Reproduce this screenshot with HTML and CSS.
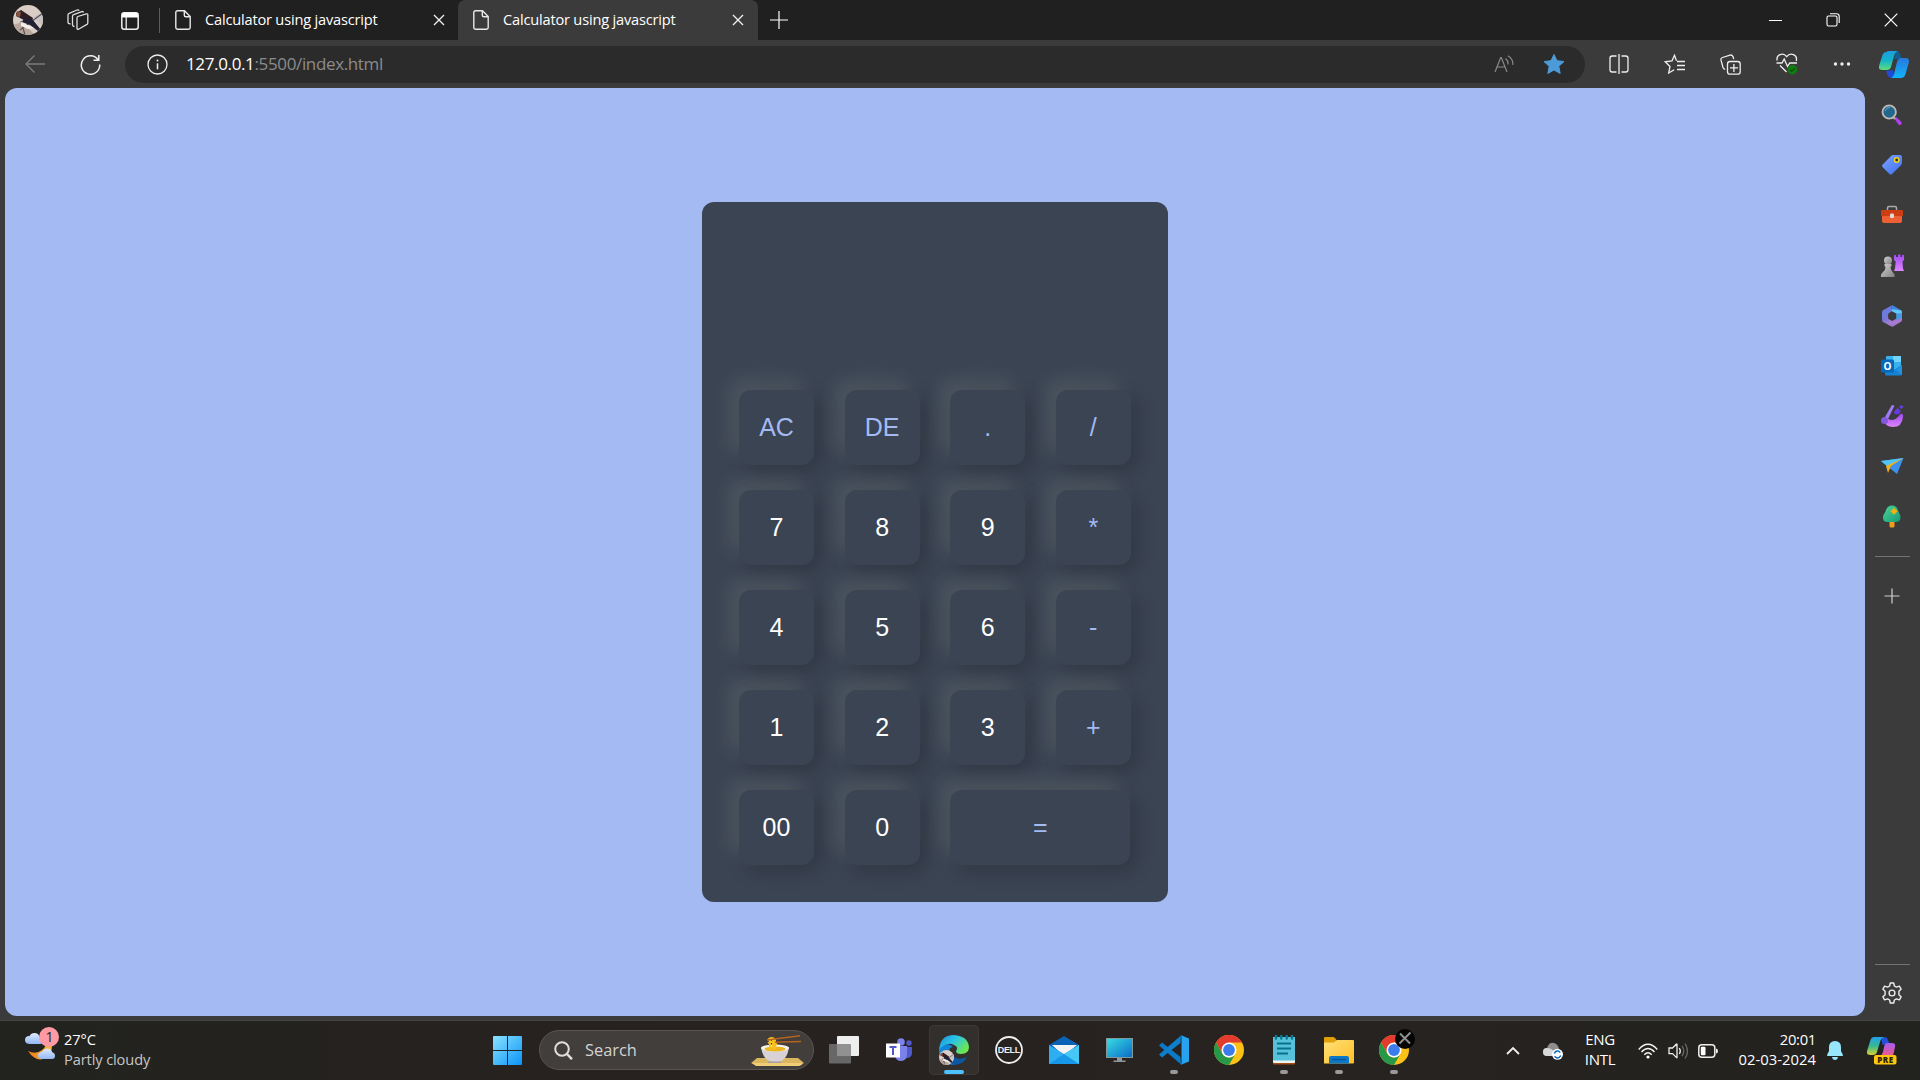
FILE: index.html
```html
<!DOCTYPE html>
<html lang="en">
<head>
<meta charset="utf-8">
<title>Calculator using javascript</title>
<link rel="stylesheet" href="styles.css">
</head>
<body>
<svg class="defs" aria-hidden="true">
  <defs>
    <linearGradient id="g-win" x1="0" y1="0" x2="1" y2="1"><stop offset="0" stop-color="#8be3ff"/><stop offset="1" stop-color="#0a93f8"/></linearGradient>
    <linearGradient id="g-cop1" x1="0" y1="0" x2="0" y2="1"><stop offset="0" stop-color="#1b9de2"/><stop offset=".5" stop-color="#14b4c8"/><stop offset="1" stop-color="#5fdc7c"/></linearGradient>
    <linearGradient id="g-cop2" x1="0" y1="0" x2="0" y2="1"><stop offset="0" stop-color="#2878dc"/><stop offset="1" stop-color="#10b4fa"/></linearGradient>
    <linearGradient id="g-pre1" x1="0" y1="0" x2="0" y2="1"><stop offset="0" stop-color="#22a0f0"/><stop offset=".5" stop-color="#38b890"/><stop offset="1" stop-color="#d8d030"/></linearGradient>
    <linearGradient id="g-pre2" x1="0" y1="0" x2="0" y2="1"><stop offset="0" stop-color="#a45cf0"/><stop offset="1" stop-color="#f05a8c"/></linearGradient>
    <linearGradient id="g-tag" x1="0" y1="0" x2="1" y2="1"><stop offset="0" stop-color="#7ba6ff"/><stop offset="1" stop-color="#3f6cf0"/></linearGradient>
    <linearGradient id="g-grey" x1="0" y1="0" x2="1" y2="1"><stop offset="0" stop-color="#d0d0d0"/><stop offset="1" stop-color="#828282"/></linearGradient>
    <linearGradient id="g-purple" x1="0" y1="0" x2="0" y2="1"><stop offset="0" stop-color="#a04af0"/><stop offset="1" stop-color="#dd86ff"/></linearGradient>
    <linearGradient id="g-tree" x1="0" y1="0" x2="1" y2="1"><stop offset="0" stop-color="#4fd697"/><stop offset="1" stop-color="#149a76"/></linearGradient>
    <linearGradient id="g-screen" x1="0" y1="0" x2="1" y2="1"><stop offset="0" stop-color="#36dbe2"/><stop offset="1" stop-color="#0c6cc8"/></linearGradient>
    <linearGradient id="g-edge" x1="0" y1="0" x2="1" y2=".6"><stop offset="0" stop-color="#1b8ee0"/><stop offset=".5" stop-color="#2bc4e4"/><stop offset="1" stop-color="#6ee84c"/></linearGradient>
    <linearGradient id="g-folder" x1="0" y1="0" x2="1" y2="1"><stop offset="0" stop-color="#ffe07a"/><stop offset="1" stop-color="#ffbe24"/></linearGradient>
    <linearGradient id="g-moon" x1="0" y1="0" x2="1" y2="0"><stop offset="0" stop-color="#f07a1c"/><stop offset="1" stop-color="#f6bd33"/></linearGradient>
    <linearGradient id="g-cloud" x1="0" y1="0" x2="0" y2="1"><stop offset="0" stop-color="#dfeaff"/><stop offset="1" stop-color="#92b8f4"/></linearGradient>
    <linearGradient id="g-365" x1="0" y1="0" x2="1" y2="1"><stop offset="0" stop-color="#6b6fd6"/><stop offset="1" stop-color="#b887cf"/></linearGradient>
    <clipPath id="c-avatar"><circle cx="15" cy="15" r="15"/></clipPath>
    <symbol id="avatar" viewBox="0 0 30 30"><g clip-path="url(#c-avatar)"><rect width="30" height="30" fill="#d9cdc6"/><path d="M0 20l9-3 13 13H0z" fill="#b9a79b"/><path d="M20 12l10-5v14z" fill="#c9c2c2"/><path d="M30 8L7 25M8 16l4 14" stroke="#55505c" stroke-width="1.2"/><path d="M3 8l5-3 6 4 6 4-1 4-8-2-8-4z" fill="#2e1e24"/><path d="M4 6l4 1-1 5-4-1z" fill="#8a533f"/><path d="M11 13l9 2 8 10-3 1-8-6-8-3z" fill="#212035"/><path d="M8 17l13 6-6 1-7-3z" fill="#f4eeea"/></g></symbol>
    <symbol id="file" viewBox="0 0 16 20"><path d="M2.5.8h7L15.2 6.500v11a1.700 1.700 0 0 1-1.700 1.700h-11A1.700 1.700 0 0 1 .8 17.500v-15A1.700 1.700 0 0 1 2.500.8zM9.300 1v4.200a1.500 1.500 0 0 0 1.500 1.500H15" fill="none" stroke="#e8e8e8" stroke-width="1.400"/></symbol>
    <symbol id="x" viewBox="0 0 12 12"><path d="M1 1l10 10M11 1L1 11" stroke="#f2f2f2" stroke-width="1.300" fill="none"/></symbol>
    <symbol id="chrome" viewBox="0 0 30 30"><circle cx="15" cy="15" r="15" fill="#fbc116"/><path d="M2 7.500A15 15 0 0 1 28 7.500H15l-6.500 11z" fill="#e33b2e"/><path d="M2 7.500a15 15 0 0 0 13 22.500l6.500-11.200A7.500 7.500 0 0 1 8.500 18.800z" fill="#279847"/><circle cx="15" cy="15" r="7.500" fill="#fff"/><circle cx="15" cy="15" r="5.900" fill="#3b7ded"/></symbol>
  </defs>
</svg>

<div class="screen">
  <header class="tabstrip">
    <div class="slot avatar-slot"><svg width="30" height="30"><use href="#avatar"/></svg></div>
    <div class="slot workspaces"><svg width="22" height="22" viewBox="0 0 22 22" fill="none" stroke="#dedede" stroke-width="1.300"><path d="M10.800 7.500l8.500-2.600q1.500-.4 1.500 1.100v8q0 1.300-1.300 1.700l-8 4.500q-1.500.7-1.500-1V9q0-1.200 .8-1.500z"/><path d="M7.500 17.500q-2-.2-2-1.700V7.200q0-1.200 1.200-1.600l8-3q1.500-.4 1.800 .9M3.500 15Q1 14.800 1 13.300V6q0-1.200 1.200-1.600L10 1q1.600-.5 2 .8"/></svg></div>
    <div class="slot tabmenu"><svg width="18" height="18" viewBox="0 0 18 18"><rect x=".8" y=".8" width="16.400" height="16.400" rx="2.500" fill="none" stroke="#eee" stroke-width="1.500"/><path d="M1 2.500Q1 .8 2.700.8h12.600Q17 .8 17 2.500v3H1z" fill="#fff"/><path d="M5.200 5v12" stroke="#eee" stroke-width="1.300"/></svg></div>
    <i class="divider"></i>
    <div class="tab"><svg width="16" height="20"><use href="#file"/></svg><span class="tab-title">Calculator using javascript</span><svg width="12" height="12"><use href="#x"/></svg></div>
    <div class="tab active"><svg width="16" height="20"><use href="#file"/></svg><span class="tab-title">Calculator using javascript</span><svg width="12" height="12"><use href="#x"/></svg></div>
    <div class="slot newtab"><svg width="18" height="18" viewBox="0 0 18 18"><path d="M9 0v18M0 9h18" stroke="#fff" stroke-width="1.200"/></svg></div>
    <div class="window-controls">
      <svg width="13" height="13" viewBox="0 0 13 13"><path d="M0 6.500h13" stroke="#fff"/></svg>
      <svg width="14" height="14" viewBox="0 0 14 14" fill="none" stroke="#fff" stroke-width="1.100"><rect x="1" y="3" width="10" height="10" rx="1.500"/><path d="M4 .8h6.500Q13.200.8 13.200 3.500V10"/></svg>
      <svg width="14" height="14" viewBox="0 0 14 14"><path d="M.7.7l12.600 12.600M13.300.7L.7 13.300" stroke="#fff" stroke-width="1.200"/></svg>
    </div>
  </header>

  <nav class="toolbar">
    <div class="slot back"><svg width="20" height="18" viewBox="0 0 20 18" fill="none" stroke="#7c7c7c" stroke-width="1.300"><path d="M20 9H1M9.500.5L1 9l8.500 8.500"/></svg></div>
    <div class="slot reload"><svg width="21" height="21" viewBox="0 0 21 21" fill="none" stroke="#f0f0f0" stroke-width="1.500"><path d="M18.200 6A9.200 9.200 0 1 0 19.700 10.500M18.800 1v5.300h-5.300"/></svg></div>
    <div class="address">
      <svg width="21" height="21" viewBox="0 0 21 21"><circle cx="10.500" cy="10.500" r="9.500" fill="none" stroke="#eee" stroke-width="1.300"/><path d="M10.500 9.300v6" stroke="#eee" stroke-width="1.500"/><circle cx="10.500" cy="6.500" r="1" fill="#eee"/></svg>
      <span class="url"><b>127.0.0.1</b>:5500/index.html</span>
      <svg width="20" height="18" viewBox="0 0 20 18" fill="none" stroke="#8a8a8a" stroke-width="1.200"><path d="M1 17L6.700 2.500h.6L13 17M3 12h8M11.500 3.500q3 2.500 2.500 6M14 .8q5.500 3.500 4.700 9"/></svg>
      <svg class="star" width="22" height="20" viewBox="0 0 22 20"><path d="M11 .5l3 6.200 7 .9-5.200 4.700 1.400 7.200L11 16l-6.200 3.500 1.400-7.200L1 7.600l7-.9z" fill="#4c9bd8" stroke="#4c9bd8" stroke-linejoin="round"/></svg>
    </div>
    <div class="tools">
      <svg width="20" height="20" viewBox="0 0 20 20" fill="none" stroke="#eee" stroke-width="1.300"><path d="M7.500 2H3.200Q1 2 1 4.200v11.600Q1 18 3.200 18h4.300M12.500 2h4.300Q19 2 19 4.200v11.600q0 2.200-2.200 2.200h-4.300M10 0v20"/></svg>
      <svg width="21" height="20" viewBox="0 0 21 20" fill="none" stroke="#eee" stroke-width="1.300"><path d="M12.500 6.800L10.500 1.300 8 6.800l-6.800 1L6 12.500 4.700 19l5.500-3.300M13 7.500h8M13 11.500h8M13 15.500h8"/></svg>
      <svg width="21" height="21" viewBox="0 0 21 21" fill="none" stroke="#eee" stroke-width="1.300"><rect x="7.500" y="7.500" width="12.700" height="12.700" rx="2.500"/><path d="M13.900 10v8M10 13.900h8M5.200 15.300Q3.500 15 3 13.500L1 6.200Q.5 4.200 2.500 3.500L10 1.100q2-.5 3 1.500l.7 2.500"/></svg>
      <svg width="22" height="22" viewBox="0 0 22 22" fill="none" stroke="#eee" stroke-width="1.300"><path d="M1.200 7.500C-.2 2 7-1.500 10.700 3.700 14.500-1.500 22 2 20.200 8M.5 10H6l2.200-4 3.300 7.500 2.300-3.500H21M4 12.500l6.500 6.500"/><circle cx="16.300" cy="16.700" r="4.800" fill="#107c10" stroke="none"/><path d="M14 16.700l1.700 1.700 3-3" stroke="#0b4f0c"/></svg>
      <svg width="18" height="4" viewBox="0 0 18 4" fill="#eee"><circle cx="2.500" cy="2" r="1.700"/><circle cx="9" cy="2" r="1.700"/><circle cx="15.500" cy="2" r="1.700"/></svg>
    </div>
    <div class="slot copilot"><svg width="30" height="27" viewBox="0 0 30 27"><path d="M17 0q3 0 4 3l1.500 4.500L15 8z" fill="#0f5f90"/><path d="M7.500 1Q8.200 0 10 0h9q-3 1-4 5l-3 11q-1 3-4 3H3q-4 0-3-4L3.500 4Q4.500 1 7.500 1z" fill="url(#g-cop1)"/><path d="M7 20l7-1 1 8h-1.500Q9 27 8 23z" fill="#224ad8"/><path d="M22 7h5q3.500 0 3 4l-3.500 12q-1 4-5 4H12q2-1 3-4l3-12q1-4 4-4z" fill="url(#g-cop2)"/></svg></div>
  </nav>

  <div class="browser-body">
    <main class="page">
      <div class="calculator">
        <div class="display"></div>
        <div class="keys">
          <button class="op">AC</button><button class="op">DE</button><button class="op">.</button><button class="op">/</button>
          <button>7</button><button>8</button><button>9</button><button class="op">*</button>
          <button>4</button><button>5</button><button>6</button><button class="op">-</button>
          <button>1</button><button>2</button><button>3</button><button class="op">+</button>
          <button>00</button><button>0</button><button class="op equal">=</button>
        </div>
      </div>
    </main>
    <aside class="sidebar">
      <div class="app"><svg width="22" height="22" viewBox="0 0 22 22"><path d="M13 14l2-1 5.500 5q.8 1.500-.5 2.500t-2.500 0z" fill="#b43df5"/><path d="M12 13l2 2" stroke="#aaa" stroke-width="2"/><circle cx="8.200" cy="8" r="6.700" fill="#23688c" stroke="#bdbab5" stroke-width="1.800"/><path d="M4 7q1.500-4 5-3.500" stroke="#5aa4c4" fill="none"/></svg></div>
      <div class="app"><svg width="22" height="22" viewBox="0 0 22 22"><path d="M12 1h7q2 0 2 2v6q0 1.200-1 2.200L11 20q-1.200 1.200-2.500 0l-7-7q-1-1.200 0-2.300L10 2q.9-1 2-1z" fill="url(#g-tag)"/><circle cx="15.700" cy="6" r="2.200" fill="#253050" stroke="#f5d313" stroke-width="1.500"/></svg></div>
      <div class="app"><svg width="24" height="20" viewBox="0 0 24 20"><path d="M7.500 6V3Q7.500 1.500 9 1.500h6q1.500 0 1.500 1.500v3" fill="none" stroke="#aaa" stroke-width="1.500"/><path d="M2 9h20v7q0 2-2 2H4q-2 0-2-2z" fill="#ed6034"/><rect x="1" y="5" width="22" height="6" rx="1" fill="#cf3e12"/><rect x="10" y="8.500" width="4" height="4.500" rx="1.300" fill="#ddd"/></svg></div>
      <div class="app"><svg width="24" height="24" viewBox="0 0 24 24"><path d="M14 1h2v2h2V.5h2.500V3h1.500V1h2v5l-1.500 1.500.5 7 1 2.500H14l1-2.500.7-7L14 6z" fill="url(#g-purple)"/><circle cx="8" cy="6.500" r="4" fill="url(#g-grey)"/><path d="M4.500 10h7v2l-1 1q.5 4 2.500 5.500l1.500 2V23H1v-2.500L3 18q2.500-1.500 2.500-5l-1-1z" fill="url(#g-grey)"/></svg></div>
      <div class="app"><svg width="22" height="22" viewBox="0 0 22 22"><path d="M10.500.5L2 5.300Q1 5.900 1 7v8.500l6.500-3V8.800l3-1.800z" fill="#6f7bdc"/><path d="M10.500.5q.8-.4 1.500 0l8 4.800q1 .6 1 1.700v4.500L10.500 6z" fill="#3f86e4"/><path d="M10.500 6L21 11.500V7l-1-1.700-9.500-1z" fill="#62c8f4"/><path d="M1 15.500l6.500-3.700L11.500 15l-1 6.500L2 17Q1 16.500 1 15.500z" fill="url(#g-365)"/><path d="M21 8v7q0 1.200-1 1.800l-8 4.700q-.8.400-1.500 0V15l4.500-2.500V9z" fill="#a779d0"/><path d="M15 9l6-1v5l-6 2z" fill="#449de4"/><path d="M10.500 6.500l4.700 2.500v4.800l-4 2.200-4-2.300V9z" fill="#3b3b3b"/></svg></div>
      <div class="app"><svg width="22" height="22" viewBox="0 0 22 22"><rect x="5" y="1" width="15" height="15" rx="1" fill="#38b1ed"/><path d="M12 1h7q1 0 1 1v5h-8z" fill="#72d4fa"/><path d="M4 12l9 3 8-5v9q0 1.500-1.500 1.500h-14Q4 20.500 4 19z" fill="#1782d3"/><path d="M15 15l6-5v10z" fill="#1f94e1"/><rect x="0" y="4.500" width="13" height="13" rx="1.200" fill="#0568bb"/><text x="6.500" y="14.700" class="outlook-o">O</text></svg></div>
      <div class="app"><svg width="23" height="24" viewBox="0 0 23 24"><path d="M2 15q2 8 10 8 9 0 10-10 .3-4-2.500-3-3 4-5 5-4 2-7 0z" fill="url(#g-purple)"/><path d="M10.500 1.500q2-1.500 2.800.6L7 15q-2 1-3.500-1z" fill="#9f7cf5"/><circle cx="3.500" cy="16.500" r="3.500" fill="#8358dc"/><path d="M13 7.500l3.500-3.500L20 7l-2.500 3.500-4-.5z" fill="#693ae0"/><path d="M19.500 1l3 1.500-2 2.500-2-1.500z" fill="#6b3ede"/></svg></div>
      <div class="app"><svg width="23" height="18" viewBox="0 0 23 18"><path d="M0 4l22.500-3L16 17l-5-4z" fill="#3d91ed"/><path d="M0 4l22.500-3L7 10z" fill="#50c5f4"/><path d="M5 9l17.500-8L10 9l-3 7z" fill="#efb118"/></svg></div>
      <div class="app"><svg width="20" height="23" viewBox="0 0 20 23"><path d="M7.500 14h5v7q0 1.500-1.500 1.500H9Q7.500 22.500 7.500 21z" fill="#f09a1e"/><path d="M10 .5q5 0 6 5 2.500 4.500 2.500 7 0 4.500-5 4.500h-8Q1 17 1 12.500q0-2.500 2.500-6Q5 .5 10 .5z" fill="url(#g-tree)"/><circle cx="12" cy="6.300" r="2.500" fill="#f6ae13"/><path d="M12 3v6.600M8.700 6.300h6.600" stroke="#f6ae13" stroke-width="1.600"/></svg></div>
      <hr>
      <svg class="add" width="16" height="16" viewBox="0 0 16 16"><path d="M8 .5v15M.5 8h15" stroke="#d0d0d0" stroke-width="1.200"/></svg>
      <hr class="bottom">
      <svg class="gear" width="22" height="22" viewBox="0 0 22 22" fill="none" stroke="#eee" stroke-width="1.400"><path d="M9.300 1h3.400l.7 3 2 1.100 3-.9 1.700 3-2.200 2.100v3.400l2.200 2.100-1.700 3-3-.9-2 1.100-.7 3H9.300l-.7-3-2-1.100-3 .9-1.700-3 2.200-2.100V9.300L1.900 7.200l1.700-3 3 .9 2-1.100z" stroke-linejoin="round"/><circle cx="11" cy="11" r="2.900"/></svg>
    </aside>
  </div>

  <footer class="taskbar">
    <div class="weather">
      <svg width="36" height="36" viewBox="0 0 36 36"><path d="M3 25q8 4 14-1 5-4 4-9h5q3 12-5 17Q11 37 3 25z" fill="url(#g-moon)"/><path d="M5 18q-5 0-5-4t4.500-4Q6 7 9.500 7q4 0 5 4 3.500 1 3.500 4t-3 3z" fill="url(#g-cloud)"/><path d="M17 33q-4 0-4-3.500t4-3.500q1.500-3.500 5-3.500 4 0 5.200 3.700Q30 27 30 30t-3 3z" fill="url(#g-cloud)"/><circle cx="24" cy="11" r="10" fill="#ff99a4"/><text x="24.500" y="16" class="badge-number">1</text></svg>
      <div class="weather-text"><span>27°C</span><span class="dim">Partly cloudy</span></div>
    </div>
    <div class="start"><svg width="29" height="29" viewBox="0 0 29 29"><path d="M1 0h13v14H0V1q0-1 1-1zM15 0h13q1 0 1 1v13H15zM0 15h14v14H1q-1 0-1-1zM15 15h14v13q0 1-1 1H15z" fill="url(#g-win)"/></svg></div>
    <div class="search">
      <svg width="19" height="19" viewBox="0 0 19 19" fill="none" stroke="#dedede" stroke-width="2"><circle cx="8" cy="8" r="6.800"/><path d="M13 13l5 5.200" stroke-width="2.500"/></svg>
      <span>Search</span>
      <svg class="noodles" width="54" height="31" viewBox="0 0 54 31"><path d="M7 23h41l6 5-4 2.500H6L1 28z" fill="#dab65e"/><path d="M2 28h50v1.500l-3 1.500H6z" fill="#f0cc76"/><path d="M24 27q-11 0-13-15h28q-2 15-13 15z" fill="#d8d2d6"/><ellipse cx="25" cy="13" rx="14" ry="3.500" fill="#f5f2ee"/><path d="M18 26.500h13v1.500H18z" fill="#a89cab"/><ellipse cx="25" cy="14" rx="10.500" ry="2.500" fill="#ecb51b"/><path d="M18 5q4-4 7 0v9M20 4v11M23 4v10M18 8q5-3 9 2" fill="none" stroke="#f6c020" stroke-width="2"/><path d="M17 5L50 .8M25 7.300l26-.8" stroke="#b4641e" stroke-width="1.600"/></svg>
    </div>
    <div class="apps">
      <div class="task"><svg width="30" height="28" viewBox="0 0 30 28"><rect x="8" y="0" width="22" height="20" rx="1" fill="#eee"/><rect x="0" y="8" width="22" height="19.500" rx="1" fill="#797979" fill-opacity=".8"/></svg></div>
      <div class="task"><svg width="27" height="24" viewBox="0 0 27 24"><circle cx="15" cy="4" r="3.800" fill="#7b83eb"/><circle cx="23" cy="5" r="2.700" fill="#5059c9"/><path d="M17 9h9v6q0 4-4 5h-5z" fill="#5059c9"/><path d="M9 8h12v8q0 7-6 7-5 0-6-5z" fill="#7b83eb"/><rect x="0" y="5.500" width="14" height="14" fill="#fff"/><path d="M3.500 9h7M7 9v8" stroke="#5059c9" stroke-width="2"/></svg></div>
      <div class="task current"><svg width="30" height="30" viewBox="0 0 30 30"><path d="M28 22Q24 30 15 30 2 29 0 17 0 7 12 10q-3 6 2 11t14 1z" fill="#0d56a2"/><path d="M0 15q0 13 14 15-6-5-5-12 1-6 5-6-6-6-14 3z" fill="#1385d7"/><path d="M0 15Q1 0 15 0q14 1 15 12 0 7-8 7-5 0-5-3 3-4-2-6Q8 6 0 15z" fill="url(#g-edge)"/><svg x="0" y="15" width="15" height="15"><use href="#avatar"/></svg></svg></div>
      <div class="task"><svg width="28" height="28" viewBox="0 0 28 28"><circle cx="14" cy="14" r="13" fill="none" stroke="#eee" stroke-width="1.800"/><text x="13.800" y="17.400" class="dell">DELL</text></svg></div>
      <div class="task"><svg width="30" height="28" viewBox="0 0 30 28"><path d="M0 9L15 0l15 9v9H0z" fill="#0a61b5"/><path d="M3 9h25L15 20z" fill="#f3f3f3"/><path d="M0 9l15 9 15-9v19H0z" fill="#2eadf0"/><path d="M0 28L30 9v19z" fill="#46c8f6"/><path d="M15 18l15 10H0z" fill="#1697e8"/></svg></div>
      <div class="task"><svg width="27" height="25" viewBox="0 0 27 25"><rect width="27" height="20" fill="#82999b"/><rect x="1" y="1" width="25" height="18" fill="url(#g-screen)"/><path d="M11 20h5v2.500h3.500v1.500h-12v-1.500H11z" fill="#91969a"/></svg></div>
      <div class="task open"><svg width="30" height="30" viewBox="0 0 30 30"><path d="M21.500 22L3 7.500 0 10.500l22 19z" fill="#0b79c5"/><path d="M21.500 8L3 22.500 0 19.500 22 .5z" fill="#0d7fcb"/><path d="M21.500 0L30 3.500v23L21.500 30q1-.5 1-2V2q0-1.500-1-2z" fill="#27a2ef"/></svg></div>
      <div class="task"><svg width="30" height="30"><use href="#chrome"/></svg></div>
      <div class="task open"><svg width="22" height="30" viewBox="0 0 22 30"><rect y="5" width="22" height="24.500" rx="1" fill="#aa4d13"/><rect y="2" width="22" height="26" rx="1" fill="#eaf4f5"/><rect y="2" width="22" height="23.500" rx="1" fill="#56c2da"/><path d="M4 8.500h14M4 13.500h14M4 18.500h11" stroke="#09718b" stroke-width="1.800"/><path d="M3 .5v3M8.300.5v3M13.700.5v3M19 .5v3" stroke="#087b93" stroke-width="2.400" stroke-linecap="round"/></svg></div>
      <div class="task open"><svg width="30" height="27" viewBox="0 0 30 27"><path d="M1 0h8q2 0 4 4h16v8H0V1q0-1 1-1z" fill="#dfa00a"/><path d="M0 5.500h10l3-2.500h16q1 0 1 1v21.500q0 1-1 1H0z" fill="url(#g-folder)"/><path d="M5 26.500V21q0-2 2-2h16q2 0 2 2v5.500z" fill="#0d78c8"/><path d="M8 22.500h14" stroke="#07569c" stroke-width="1.500"/></svg></div>
      <div class="task open"><svg width="30" height="30"><use href="#chrome"/></svg><svg class="overlay" width="20" height="20" viewBox="0 0 20 20"><circle cx="10" cy="10" r="10" fill="#050505"/><path d="M5 4.500l10 10M15.500 3.500L4.500 14.500" stroke="#8e8e8e" stroke-width="2"/></svg></div>
    </div>
    <div class="tray">
      <svg class="chevron" width="14" height="9" viewBox="0 0 14 9"><path d="M1 8l6-6 6 6" fill="none" stroke="#eee" stroke-width="1.900"/></svg>
      <svg class="cloud" width="20" height="18" viewBox="0 0 20 18"><path d="M4 14q-4 0-4-4t4-4q2-6 7-5 4 1 5 6l1 4-5 3z" fill="#8e8e8e"/><path d="M4 14q-4 0-4-4t4-4q4 0 8 4v4z" fill="#d8d8d8"/><circle cx="14.500" cy="12.300" r="5.500" fill="#fff"/><path d="M11.300 11.500q1-3 4-2.500l2 1.500M17.800 13.500q-1.500 3-4.300 2.300l-2-1.500" fill="none" stroke="#0a6ac0" stroke-width="1.500"/></svg>
      <div class="lang"><span>ENG</span><span>INTL</span></div>
      <svg class="wifi" width="20" height="16" viewBox="0 0 20 16" fill="none" stroke="#f4f4f4" stroke-width="1.400"><path d="M.7 6.500q9.300-10.500 18.600 0M3.500 9q6.500-7 13 0M6.300 11.700q3.700-4 7.400 0"/><circle cx="10" cy="14" r="1.600" fill="#fff" stroke="none"/></svg>
      <svg class="sound" width="20" height="18" viewBox="0 0 20 18" fill="none" stroke="#eee" stroke-width="1.300"><path d="M1 6h3.500l4-4q.5-.4.5.4v12.800q0 .8-.5.4l-4-4H1z"/><path d="M11.300 6q2 3 0 6"/><path d="M14 3.800q3.500 5.200 0 10.400M17 1.500q5 7.500 0 15" stroke="#666"/></svg>
      <svg class="battery" width="20" height="14" viewBox="0 0 20 14"><rect x=".8" y=".8" width="16" height="12.400" rx="3" fill="none" stroke="#eee" stroke-width="1.500"/><rect x="2.800" y="2.800" width="4.700" height="8.400" rx="1" fill="#fff"/><path d="M18 4.500q2 0 2 2.500t-2 2.500z" fill="#eee"/></svg>
      <div class="clock"><span class="time">20:01</span><span>02-03-2024</span></div>
      <svg class="bell" width="16" height="19" viewBox="0 0 16 19"><path d="M8 0q6 .3 6 6v4l2 4q.3 1-1 1H1q-1.300 0-1-1l2-4V6q0-5.700 6-6zM5 16h6q-.5 3-3 3t-3-3z" fill="#97e6fb"/></svg>
      <svg class="pre" width="30" height="29" viewBox="0 0 30 29"><path d="M14 1h3q3 0 4 3l1.500 4-7 1z" fill="#254fd4"/><path d="M7 1h10q-3 1-4 5L10 16q-1 3-4 3H3q-4 0-3-4L3.500 4Q4.500 1 7 1z" fill="url(#g-pre1)"/><path d="M20 7h5q4 0 3 4l-2 9H13q2-1 3-4l1-5q1-4 3-4z" fill="url(#g-pre2)"/><rect x="7" y="19" width="22.500" height="9.500" rx="2" fill="#ffc60e"/><text x="18.500" y="26.700" class="pre-text">PRE</text></svg>
    </div>
  </footer>
</div>
</body>
</html>
```
FILE: styles.css
```css
* { box-sizing: border-box; }
body { margin: 0; background: #3b3b3b; font-family: "Open Sans", "Noto Sans", sans-serif; color: #fff; overflow: hidden; }
.defs { position: absolute; width: 0; height: 0; }
svg { display: block; flex: none; }
.screen { width: 1920px; height: 1080px; display: grid; grid-template-rows: 40px 48px 932px 60px; }
.slot { display: flex; align-items: center; justify-content: center; flex: none; }

/* tab strip */
.tabstrip { display: flex; background: #202020; align-items: stretch; }
.avatar-slot { width: 56px; }
.workspaces { width: 43px; }
.tabmenu { width: 60px; padding: 1px 0 0 2px; }
.divider { width: 1px; height: 25px; margin-top: 8px; background: #5c5c5c; }
.tab { display: flex; align-items: center; width: 298px; padding: 0 13px 0 15px; }
.tab.active { width: 300px; padding: 0 14px 0 15px; background: #3b3b3b; border-radius: 7px 7px 0 0; }
.tab-title { flex: 1; margin-left: 14px; padding-bottom: 3px; font-size: 14.6px; letter-spacing: -.19px; white-space: nowrap; }
.newtab { width: 42px; }
.window-controls { display: flex; align-items: center; gap: 44px; margin-left: auto; padding-right: 22px; }

/* toolbar */
.toolbar { display: flex; align-items: center; background: #3b3b3b; }
.back { width: 70px; }
.reload { width: 40px; }
.address { display: flex; align-items: center; width: 1460px; height: 37px; margin-left: 15px; padding: 0 20px 0 22px; border-radius: 19px; background: #2b2b2b; }
.url { flex: 1; margin-left: 18px; padding-bottom: 2px; font-size: 17px; color: #8b8b8b; letter-spacing: -.36px; }
.url b { font-weight: 400; color: #fff; }
.star { margin-left: 29px; }
.tools { display: flex; flex: 1; align-items: center; justify-content: space-between; padding: 0 13px 0 24px; }
.copilot { width: 56px; padding-left: 4px; }

/* browser content */
.browser-body { display: flex; background: #3b3b3b; }
.page { display: flex; align-items: center; justify-content: center; width: 1860px; height: 928px; margin-left: 5px; border-radius: 12px; background: #a3baf2; }
.calculator { width: 466px; height: 700px; padding: 37px; border-radius: 12px; background: #3b4453; }
.display { height: 151px; }
.keys { display: grid; grid-template-columns: repeat(4, 75px); gap: 25px 30.600px; }
.keys button { height: 75px; padding: 0; border: 0; border-radius: 12px; background: #3b4453; color: #fff; font: 25px "Liberation Sans", Arial, sans-serif; box-shadow: -10px -10px 19px rgba(240,255,220,.1), 6px 6px 19px rgba(0,0,0,.2); }
.keys .op { color: #a3baf2; }
.keys .equal { grid-column: span 2; width: 180px; }
.sidebar { display: flex; flex-direction: column; align-items: center; width: 54px; padding-top: 2px; }
.app { display: flex; align-items: center; justify-content: center; height: 50.200px; }
.sidebar hr { width: 35px; height: 1px; margin: 14px 0 0; border: 0; background: #747474; }
.add { margin-top: 31px; }
.sidebar .bottom { margin-top: auto; }
.gear { margin: 17px 0 16px; }
.outlook-o { font: 700 10px "Open Sans", sans-serif; fill: #fff; text-anchor: middle; }

/* taskbar */
.taskbar { display: flex; align-items: center; background: linear-gradient(90deg, #22231f, #272220 30%, #272320 70%, #22221f); border-top: 1px solid #454545; }
.weather { display: flex; width: 493px; height: 59px; padding-left: 25px; padding-top: 5px; }
.weather-text { display: flex; flex-direction: column; margin-left: 3px; padding-top: 3px; font-size: 14.600px; line-height: 20px; letter-spacing: -.1px; }
.dim { color: #c6c6c6; }
.badge-number { font: 14px "Open Sans", sans-serif; text-anchor: middle; fill: #222; }
.start { width: 46px; }
.search { display: flex; align-items: center; width: 275px; height: 40px; margin-bottom: 1px; padding: 0 9px 0 14px; border: 1px solid #585452; border-radius: 20px; background: #423e3c; color: #d3d3d3; font-size: 16.400px; letter-spacing: 0; }
.search span { margin-left: 12px; padding-bottom: 1px; }
.noodles { margin-left: auto; }
.apps { display: flex; gap: 5px; margin: 0 0 1px 5px; }
.task { position: relative; display: flex; align-items: center; justify-content: center; width: 50px; height: 50px; border-radius: 5px; }
.current { background: #322f2d; box-shadow: inset 0 0 0 1px #3c3937; }
.open::after, .current::after { content: ""; position: absolute; bottom: 1px; width: 8px; height: 4px; border-radius: 2px; background: #999; }
.current::after { width: 20px; background: #4cc2ff; }
.overlay { position: absolute; left: 26px; top: 4px; }
.dell { font: 700 9px "Liberation Sans", sans-serif; text-anchor: middle; fill: #eee; letter-spacing: -.4px; }
.tray { display: flex; align-items: center; flex: 1; margin-left: 87px; }
.cloud { margin-left: 23px; }
.lang { display: flex; flex-direction: column; align-items: center; width: 32px; margin-left: 21px; padding-bottom: 3px; font-size: 15px; line-height: 20px; letter-spacing: -.3px; }
.wifi { margin-left: 22px; }
.sound { margin-left: 10px; }
.battery { margin-left: 10px; }
.clock { display: flex; flex-direction: column; align-items: flex-end; width: 98px; padding-bottom: 4px; font-size: 14.800px; line-height: 20px; letter-spacing: .03px; }
.time { letter-spacing: -.3px; }
.bell { margin-left: 11px; }
.pre { margin-left: 24px; }
.pre-text { font: 800 8px "Open Sans", sans-serif; text-anchor: middle; fill: #2c2100; letter-spacing: .5px; }
```
